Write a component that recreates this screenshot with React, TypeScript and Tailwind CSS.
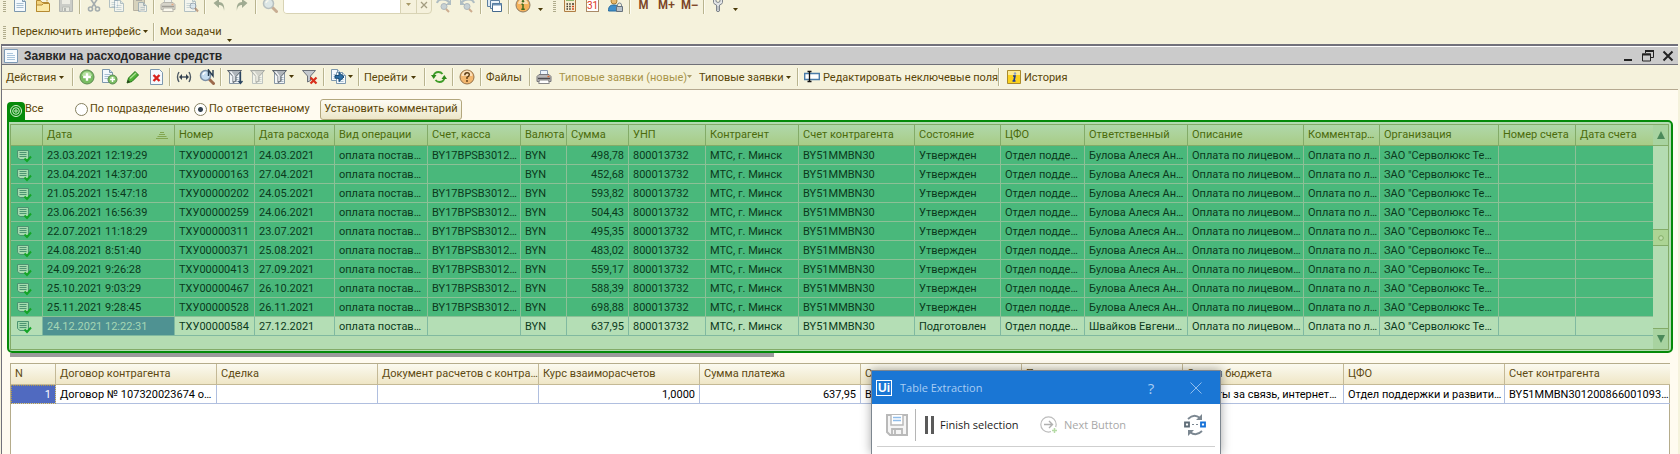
import React from "react";

type Kids = { children?: React.ReactNode };

const Svg = ({ children, w = 16, h = 16 }: Kids & { w?: number; h?: number }) => (
  <svg width={w} height={h} viewBox={`0 0 ${w} ${h}`} className="shrink-0" aria-hidden="true">
    {children}
  </svg>
);

const Page = ({ x = 2, y = 1, w = 12, h = 14, faded = false }) => (
  <g opacity={faded ? 0.55 : 1}>
    <path d={`M${x + 0.5} ${y + 0.5}h${w - 4}l3 3v${h - 4}h-${w - 1}z`} fill="#f4f9fd" stroke="#7d98ae" />
    <path d={`M${x + w - 3.5} ${y + 0.5}v3h3`} fill="#cfdfec" stroke="#7d98ae" />
    <path d={`M${x + 2.5} ${y + 5.5}h${w - 5}M${x + 2.5} ${y + 7.5}h${w - 5}M${x + 2.5} ${y + 9.5}h${w - 5}`} stroke="#a9c0d2" />
  </g>
);

const Lens = ({ faded = false }) => (
  <g opacity={faded ? 0.5 : 1}>
    <path d="M10.500 10.500l4 4" stroke="#9c6a4c" strokeWidth="3" strokeLinecap="round" />
    <circle cx="6.500" cy="6.500" r="5" fill="#c5dcf0" stroke="#7b8fa5" strokeWidth="1.500" />
    <path d="M4 6a3 3 0 0 1 2.500-2.500" stroke="#fff" strokeWidth="1.300" fill="none" />
  </g>
);

const Funnel = ({ faded = false }) => (
  <g opacity={faded ? 0.5 : 1}>
    <path d="M2.500 3.500v11h10v-11z" fill="#f3f6f8" stroke="#8796a4" />
    <path d="M9 8.500h2.500M9 10.500h2.500M9 12.500h2.500" stroke="#a9b8c5" />
    <path d="M.5 1.500h14L9 7.500v4.500l-3 1.500v-6z" fill="#aeb4ba" stroke="#5c646c" />
    <path d="M3.500 2.500L7 7v5" stroke="#f2f4f6" strokeWidth="1.300" fill="none" />
  </g>
);

const Printer = ({ faded = false }) => (
  <g opacity={faded ? 0.5 : 1}>
    <path d="M4.500 6V1.500h7V6" fill="#eef5fc" stroke="#8a9ab0" />
    <path d="M1 7.500L3 5.500h10l2 2V12.500H1z" fill="#b9b7b7" stroke="#77777b" />
    <path d="M2 9.500h12" stroke="#4b4b50" strokeWidth="1.500" />
    <path d="M3.500 11h9l.8 3.500H2.700z" fill="#fff" stroke="#888" />
    <path d="M11.500 7.500h2" stroke="#d9652c" strokeWidth="1.500" />
  </g>
);

const Floppy = () => (
  <g opacity=".55">
    <path d="M1.500 1.500h12l1 1v12h-13z" fill="#aab0b8" stroke="#7e868f" />
    <path d="M4 2h8v5H4z" fill="#e6e8ea" />
    <path d="M4.500 10h7v4.500h-7z" fill="#dfe2e4" stroke="#8b929a" />
    <path d="M6 11h2v3H6z" fill="#7e868f" />
  </g>
);

const PlusBall = ({ x = 8, y = 8, r = 7 }) => (
  <g>
    <circle cx={x} cy={y} r={r} fill="#79bd62" stroke="#5c8a50" />
    <path d={`M${x - r + 2} ${y - 1}a${r - 2} ${r - 2.5} 0 0 1 ${2 * (r - 2)} 0z`} fill="#b4dfa0" />
    <path d={`M${x} ${y - r * 0.55}v${r * 1.1}M${x - r * 0.55} ${y}h${r * 1.1}`} stroke="#fff" strokeWidth={r > 5 ? 2.4 : 1.5} />
  </g>
);

const Arrow = ({ dim = false }) => (
  <svg width="5" height="3" viewBox="0 0 5 3" className="mb-[2px] shrink-0" aria-hidden="true">
    <path d="M0 0h5L2.500 3z" fill={dim ? "#a89a68" : "#4a3a08"} />
  </svg>
);

const Sep = () => (
  <span className="flex h-[18px] w-[5px] shrink-0 justify-center">
    <span className="h-full w-px bg-[#b9b48f]" />
    <span className="h-full w-px bg-[#fdfcf0]" />
  </span>
);

const Grip = () => (
  <span className="h-[13px] w-[3px] shrink-0 bg-[repeating-linear-gradient(#b0ac8c_0_1px,transparent_1px_2px)]" />
);

const IconButton = ({ label, children }: Kids & { label: string }) => (
  <button type="button" aria-label={label} className="flex h-[22px] w-[23px] shrink-0 items-center justify-center">
    {children}
  </button>
);

const More = () => (
  <button type="button" aria-label="Ещё" className="flex h-4 w-3 shrink-0 items-end justify-center">
    <Arrow />
  </button>
);

function MainToolbar() {
  return (
    <div className="-mt-[6px] flex h-[22px] items-center">
      <span className="ml-[3px] mr-[2px] flex"><Grip /></span>
      <IconButton label="Новый"><Svg><Page /></Svg></IconButton>
      <IconButton label="Открыть">
        <Svg>
          <path d="M1.500 14.500v-11h4l1.500 2h6.500v9z" fill="#f2d27c" stroke="#b58a32" />
          <path d="M8 1.500h4v3" fill="none" stroke="#c89a3c" />
          <path d="M1.500 14.500V8H7l1.500-1.500h6v8z" fill="#fbe9a6" stroke="#b58a32" />
        </Svg>
      </IconButton>
      <IconButton label="Сохранить"><Svg><Floppy /></Svg></IconButton>
      <Sep />
      <IconButton label="Вырезать">
        <Svg>
          <g opacity=".6" fill="none" stroke="#6f7f90" strokeWidth="1.600">
            <path d="M4 1l6 9M12 1L6 10" />
            <circle cx="4.500" cy="12" r="2" />
            <circle cx="11.500" cy="12" r="2" />
          </g>
        </Svg>
      </IconButton>
      <IconButton label="Копировать"><Svg><Page x={0} y={0} w={9} h={11} faded /><Page x={5} y={3} w={10} h={12} faded /></Svg></IconButton>
      <IconButton label="Вставить">
        <Svg>
          <path d="M1.500 2.500h11v11h-11z" fill="#c3bda8" stroke="#8e897a" opacity=".6" />
          <path d="M4 1h6v3H4z" fill="#9a9a98" opacity=".7" />
          <Page x={6} y={5} w={9} h={10} faded />
        </Svg>
      </IconButton>
      <Sep />
      <IconButton label="Печать"><Svg><Printer faded /></Svg></IconButton>
      <IconButton label="Предварительный просмотр">
        <Svg><Page x={1} faded /><g opacity=".6"><circle cx="10" cy="9" r="3" fill="#cfe0ee" stroke="#77879a" /><path d="M12 11l3 3.500" stroke="#9c6a4c" strokeWidth="2" /></g></Svg>
      </IconButton>
      <Sep />
      <IconButton label="Отменить"><Svg><path d="M13 14c0-4-2-6-5-6v3L2.500 6 8 2v3c4 0 6 4 5 9z" fill="#a0ab92" /></Svg></IconButton>
      <IconButton label="Повторить"><Svg><path d="M3 14c0-4 2-6 5-6v3l5.500-5L8 2v3c-4 0-6 4-5 9z" fill="#a0ab92" /></Svg></IconButton>
      <Sep />
      <IconButton label="Найти"><Svg><Lens faded /></Svg></IconButton>
      <div className="ml-[2px] flex h-[18px] w-[149px] overflow-hidden rounded-b border border-[#d8d3b4] bg-[#f5f1dc]">
        <input aria-label="Строка поиска" className="min-w-0 flex-1 bg-white outline-none" />
        <button type="button" aria-label="Список" className="flex w-[16px] items-center justify-center border-l border-[#d8d3b4]"><Arrow dim /></button>
        <button type="button" aria-label="Очистить" className="flex w-[15px] items-center justify-center border-l border-[#d8d3b4]">
          <Svg w={8} h={8}><path d="M1 1l6 6M7 1L1 7" stroke="#a39c80" strokeWidth="1.300" /></Svg>
        </button>
      </div>
      {["Найти следующий", "Найти предыдущий"].map((label, i) => (
        <IconButton key={label} label={label}>
          <Svg>
            <g opacity=".55" transform={i ? "translate(16 0) scale(-1 1)" : undefined}>
              <path d="M1 6c1-4 8-5 12-1" stroke="#7792ad" strokeWidth="2" fill="none" />
              <path d="M15 2v6h-5z" fill="#7792ad" />
            </g>
            <g opacity=".6"><circle cx="8" cy="9.500" r="3" fill="#a9bcd0" stroke="#8193a8" /><path d="M10 12l3 3" stroke="#b4805e" strokeWidth="2" /></g>
          </Svg>
        </IconButton>
      ))}
      <Sep />
      <IconButton label="Окна">
        <Svg>
          <path d="M.5 1.500h9v8h-9z" fill="#dce9f3" stroke="#5d7f9f" />
          <path d="M3.500 3.500h9v8h-9z" fill="#eaf2f8" stroke="#5d7f9f" />
          <path d="M5.500 6.500h9v8h-9z" fill="#fff" stroke="#44698d" />
          <path d="M5.500 7.500h9" stroke="#6d92b5" strokeWidth="2" />
        </Svg>
      </IconButton>
      <Sep />
      <IconButton label="Справка">
        <Svg>
          <circle cx="8" cy="8" r="7" fill="#f5b25a" stroke="#8e7b62" />
          <path d="M3 7a5 5 0 0 1 10 0z" fill="#fbdcae" />
          <path d="M8 7v5.500M6.500 7.200H8M6.300 12.300h3.500" stroke="#3f6b1e" strokeWidth="1.500" />
          <circle cx="8" cy="4.300" r="1.200" fill="#3f6b1e" />
        </Svg>
      </IconButton>
      <More />
      <span className="ml-[7px] mr-[2px] flex"><Grip /></span>
      <IconButton label="Калькулятор">
        <Svg>
          <path d="M2.500.5h11v14h-11z" fill="#f6ecd0" stroke="#b07e44" />
          <path d="M4 2h8v2H4z" fill="#8fb56d" />
          <path d="M4.500 7h1.500M7.200 7h1.500M10 7h2M4.500 9.500h1.500M7.200 9.500h1.500M4.500 12h1.500M7.200 12h1.500" stroke="#3c3428" strokeWidth="1.500" />
          <path d="M10 9.500h2M10 12h2" stroke="#d2491e" strokeWidth="1.500" />
        </Svg>
      </IconButton>
      <IconButton label="Календарь">
        <span className="flex h-[14px] w-[13px] items-center justify-center border border-t-2 border-[#a98a68] border-t-[#8899aa] bg-white text-[10px] leading-[10px] text-[#e0331c]">31</span>
      </IconButton>
      <IconButton label="Пользователи">
        <Svg>
          <circle cx="6" cy="4" r="3" fill="#e8b96e" stroke="#a67d34" />
          <path d="M.5 14c0-5 2-6 5.500-6s4 1 4.500 3v3z" fill="#3f8fcb" stroke="#2a6c9e" />
          <path d="M9.500 9.500V8a2 2 0 0 1 4 0v1.500" fill="none" stroke="#7a8691" />
          <path d="M8.500 9.500h6v5h-6z" fill="#b8c2ca" stroke="#66727d" />
        </Svg>
      </IconButton>
      <Sep />
      {["M", "M+", "M−"].map((m) => (
        <button key={m} type="button" className="flex h-[22px] w-[23px] shrink-0 items-center justify-center font-['Liberation_Sans',sans-serif] text-[12px] font-bold leading-[10px] text-[#7b4426]">
          {m}
        </button>
      ))}
      <Sep />
      <IconButton label="Настройки">
        <Svg>
          <path d="M3.500 1.500v4Q4 7.500 6.500 8v6q1.500 1.500 3 0V8q2.500-.5 3-2.500v-4L10 .5v4l-2 1-2-1v-4z" fill="#e2e4e6" stroke="#7f858b" />
          <path d="M8 9v4.500" stroke="#9aa0a6" />
        </Svg>
      </IconButton>
      <More />
    </div>
  );
}

function InterfaceBar() {
  return (
    <div className="flex h-7 items-center pt-1">
      <span className="ml-[3px] flex"><Grip /></span>
      <button type="button" className="ml-[6px] flex w-[139px] shrink-0 items-center justify-between whitespace-nowrap pr-[3px]">
        Переключить интерфейс <Arrow />
      </button>
      <Sep />
      <button type="button" className="ml-[4px] whitespace-nowrap">Мои задачи</button>
      <span className="ml-[2px] flex pt-2"><More /></span>
    </div>
  );
}

function TitleBar() {
  return (
    <div className="flex h-[18px] items-center border-b border-[#707078] bg-[#cbcbcb]">
      <span className="ml-[2px] flex w-[14px]">
        <Svg w={14} h={14}>
          <path d="M.5.5h13v13H.5z" fill="#f7fbfe" stroke="#7d9ab5" />
          <path d="M3 4.500h6M3 6.500h8M3 8.500h8M3 10.500h8" stroke="#a9c5dc" />
        </Svg>
      </span>
      <h1 className="ml-[6px] flex-1 whitespace-nowrap font-['Liberation_Sans',sans-serif] text-[12px] font-bold text-[#262626]">
        Заявки на расходование средств
      </h1>
      <button type="button" aria-label="Свернуть" className="flex w-[20px] justify-center"><Svg w={12} h={12}><path d="M2 10h8" stroke="#222" strokeWidth="2" /></Svg></button>
      <button type="button" aria-label="Восстановить" className="flex w-[20px] justify-center">
        <Svg w={12} h={12}><path d="M3.500 3V1h8v6.500H9M.5 4h8v7h-8z" fill="none" stroke="#222" /><path d="M3 1h9M0 4.500h9" stroke="#222" strokeWidth="2" /></Svg>
      </button>
      <button type="button" aria-label="Закрыть" className="flex w-[20px] justify-center"><Svg w={12} h={12}><path d="M1.500 1.500l9 9M10.500 1.500l-9 9" stroke="#222" strokeWidth="2" /></Svg></button>
    </div>
  );
}

function ActionBar() {
  return (
    <div className="flex h-[25px] items-center border-b border-[#b5a990] bg-[#f5f2dc]">
      <button type="button" className="ml-1 flex w-[64px] shrink-0 items-center justify-between pr-[6px] pt-[2px]">Действия <Arrow /></button>
      <Sep />
      <IconButton label="Добавить"><Svg><PlusBall /></Svg></IconButton>
      <IconButton label="Добавить копированием"><Svg><Page x={0} y={0} w={11} h={14} /><PlusBall x={10.5} y={10.5} r={4.5} /></Svg></IconButton>
      <IconButton label="Изменить">
        <Svg><path d="M2 14l1.500-5L10 2.500 13.500 6 7 12.500z" fill="#4fb236" stroke="#25751a" /><path d="M5 9.500L11 4" stroke="#a9e08f" strokeWidth="1.500" /><path d="M2 14l1-3 2 2z" fill="#2d3a22" /></Svg>
      </IconButton>
      <IconButton label="Пометить на удаление">
        <Svg><path d="M2.500.5h9l3 3v12h-12z" fill="#f4f9fd" stroke="#7d98ae" /><path d="M5.500 6l6 6M11.500 6l-6 6" stroke="#d8221c" strokeWidth="2.400" /></Svg>
      </IconButton>
      <Sep />
      <IconButton label="Интервал дат">
        <Svg><path d="M3 3q-3 5 0 10M13 3q3 5 0 10M4 8h8" fill="none" stroke="#4d5964" strokeWidth="1.400" /><path d="M3 8l3-3v6zM13 8l-3-3v6z" fill="#33404c" /></Svg>
      </IconButton>
      <IconButton label="Найти по номеру">
        <Svg><Lens /><path d="M9.500 7V1l4.500 6V1" fill="none" stroke="#263b50" strokeWidth="1.400" /></Svg>
      </IconButton>
      <Sep />
      <IconButton label="Отбор"><Svg><Funnel /><path d="M13.500 3v11M11.500 12l2 2.500 2-2.500" stroke="#2b4560" strokeWidth="1.300" fill="none" /></Svg></IconButton>
      <IconButton label="Отбор по значению"><Svg><Funnel faded /></Svg></IconButton>
      <button type="button" aria-label="История отборов" className="flex w-[29px] shrink-0 items-center gap-px pl-[3px]"><Svg><Funnel /></Svg><Arrow /></button>
      <IconButton label="Отключить отбор">
        <Svg><path d="M.5 1.500h13L8.500 7v4.500l-3 1.500V7z" fill="#c4c9ce" stroke="#6b7178" /><path d="M8.500 8.500l6 6M14.500 8.500l-6 6" stroke="#d8301c" strokeWidth="2.200" /></Svg>
      </IconButton>
      <Sep />
      <button type="button" aria-label="Ввести на основании" className="flex w-[30px] shrink-0 items-center gap-px pl-[5px]">
        <Svg><Page x={0} y={0} w={10} h={12} /><Page x={5} y={3} w={10} h={12} /><path d="M4 9V6.500h4v-3l5 4.500-5 4.500V9.500z" fill="#2c6ea5" stroke="#174a75" /></Svg><Arrow />
      </button>
      <Sep />
      <button type="button" className="ml-[3px] flex w-[58px] shrink-0 items-center justify-between pr-[6px] pt-[2px]">Перейти <Arrow /></button>
      <Sep />
      <IconButton label="Обновить">
        <Svg><path d="M2.500 7q1-4 5-4 2.500 0 4 2M13.500 9q-1 4-5 4-2.500 0-4-2" fill="none" stroke="#3e9c28" strokeWidth="1.800" /><path d="M0 6h5.500L2.700 10zM16 10h-5.500L13.300 6z" fill="#2e8a1b" /></Svg>
      </IconButton>
      <Sep />
      <IconButton label="Помощь">
        <Svg><circle cx="8" cy="8" r="7" fill="#f3b76f" stroke="#94724a" /><path d="M2.500 7a5.500 5.500 0 0 1 11 0z" fill="#fbdfb8" /><path d="M5.800 6.200q0-2.500 2.300-2.500t2.200 2.100Q10.300 7.200 8 8.300V10" fill="none" stroke="#5b3a12" strokeWidth="1.400" /><circle cx="8" cy="12" r=".9" fill="#5b3a12" /></Svg>
      </IconButton>
      <Sep />
      <button type="button" className="ml-[3px] w-[41px] shrink-0 pt-[2px] text-left">Файлы</button>
      <Sep />
      <button type="button" disabled className="ml-[4px] flex w-[156px] shrink-0 items-center whitespace-nowrap text-[#a89448]">
        <Svg><Printer /></Svg>
        <span className="ml-[7px] flex-1 pt-[2px] text-left">Типовые заявки (новые)</span>
        <Arrow dim />
      </button>
      <button type="button" className="ml-[7px] flex w-[96px] shrink-0 items-center justify-between whitespace-nowrap pr-[4px] pt-[2px]">Типовые заявки <Arrow /></button>
      <Sep />
      <button type="button" className="ml-[4px] flex w-[192px] shrink-0 items-center gap-[3px] whitespace-nowrap">
        <Svg><path d="M.7 4.500h14.600v6H.7z" fill="#fff" stroke="#4a7ba8" strokeWidth="1.400" /><path d="M3.500 2.500h4M3.500 12.500h4M5.500 2.500v10" stroke="#111" strokeWidth="1.300" /></Svg>
        <span className="pt-[2px]">Редактировать неключевые поля</span>
      </button>
      <Sep />
      <button type="button" className="ml-[6px] flex items-center gap-[3px]">
        <Svg w={14} h={14}><path d="M.5.5h13v13H.5z" fill="#fbd21e" stroke="#a98a2c" /><path d="M1 1h12v4H1z" fill="#fdeb94" /><path d="M6 6h2L7 10.500M5.500 11h3" stroke="#1b3a9c" strokeWidth="1.600" fill="none" /><circle cx="8" cy="3.500" r="1.200" fill="#8ea4c8" /></Svg>
        <span className="pt-[2px]">История</span>
      </button>
    </div>
  );
}

function Radio({ label, checked }: { label: string; checked?: boolean }) {
  return (
    <label className="flex items-center whitespace-nowrap">
      <input
        type="radio"
        name="filter"
        defaultChecked={checked}
        className="mr-[2px] size-[13px] shrink-0 appearance-none rounded-full border border-[#85805f] bg-white checked:bg-[radial-gradient(#33414d_0_2px,#fff_3px)]"
      />
      {label}
    </label>
  );
}

function FilterRow() {
  return (
    <div className="flex h-[30px] items-center">
      <span className="ml-[5px] flex size-[18px] shrink-0 items-center justify-center self-end rounded-t bg-[#068a0a]">
        <Svg w={14} h={14}>
          <g fill="none" stroke="#d5f0d0"><circle cx="7" cy="7" r="5.500" /><circle cx="7" cy="7" r="3.300" /><circle cx="7" cy="7" r="1.200" /></g>
        </Svg>
      </span>
      <div className="flex items-center pt-2">
        <span className="w-[50px]">Все</span>
        <span className="w-[119px]"><Radio label="По подразделению" /></span>
        <span className="w-[126px]"><Radio label="По ответственному" checked /></span>
        <button type="button" className="h-[21px] w-[142px] whitespace-nowrap rounded-[3px] border border-[#b3a77e] bg-linear-to-b from-[#fdfcf4] to-[#ece6c8]">
          Установить комментарий
        </button>
      </div>
    </div>
  );
}

const columns = ["", "Дата", "Номер", "Дата расхода", "Вид операции", "Счет, касса", "Валюта", "Сумма", "УНП", "Контрагент", "Счет контрагента", "Состояние", "ЦФО", "Ответственный", "Описание", "Комментар…", "Организация", "Номер счета", "Дата счета"];
const widths = [32, 132, 80, 80, 93, 93, 46, 62, 77, 93, 116, 86, 84, 103, 116, 76, 119, 77, 78];

const payments: [string, string, string, boolean, string][] = [
  ["23.03.2021 12:19:29", "ТХУ00000121", "24.03.2021", true, "498,78"],
  ["23.04.2021 14:37:00", "ТХУ00000163", "27.04.2021", false, "452,68"],
  ["21.05.2021 15:47:18", "ТХУ00000202", "24.05.2021", true, "593,82"],
  ["23.06.2021 16:56:39", "ТХУ00000259", "24.06.2021", true, "504,43"],
  ["22.07.2021 11:18:29", "ТХУ00000311", "23.07.2021", true, "495,35"],
  ["24.08.2021 8:51:40", "ТХУ00000371", "25.08.2021", true, "483,02"],
  ["24.09.2021 9:26:28", "ТХУ00000413", "27.09.2021", true, "559,17"],
  ["25.10.2021 9:03:29", "ТХУ00000467", "26.10.2021", true, "588,39"],
  ["25.11.2021 9:28:45", "ТХУ00000528", "26.11.2021", true, "698,88"],
  ["24.12.2021 12:22:31", "ТХУ00000584", "27.12.2021", false, "637,95"],
];

const DocIcon = () => (
  <Svg w={18} h={14}>
    <path d="M2.500 1.500h11v9H5l-2.500-2z" fill="#a5dcae" stroke="#4d9472" />
    <path d="M4.500 3.500h7M4.500 5.500h7M4.500 7.500h7" stroke="#4d9472" />
    <path d="M9.500 9.500l2.500 2.500 4-4.500" fill="none" stroke="#13a526" strokeWidth="2" />
  </Svg>
);

function PaymentsTable() {
  return (
    <div className="ml-[5px] mr-[5px] flex rounded-[5px] rounded-tl-none border-2 border-[#068a0a] bg-[#b4dcb2] pb-px pl-px pr-[2px] pt-[2px]">
      <div className="min-w-0 flex-1 border border-r-0 border-[#83ab68] pb-[13px]">
        <table className="w-full table-fixed border-separate border-spacing-0 whitespace-nowrap text-left text-[#0b3a1c]">
          <colgroup>{widths.map((w, i) => <col key={i} style={{ width: w }} />)}</colgroup>
          <thead>
            <tr>
              {columns.map((c, i) => (
                <th key={i} className="h-[21px] overflow-hidden border-b border-r border-[#83ab68] bg-linear-to-b from-[#b0d8aa] to-[#a8cc86] p-0 pl-1 font-normal text-[#4b6b0c]">
                  {i === 1 ? (
                    <span className="flex items-center justify-between pr-[6px]">
                      {c}
                      <Svg w={12} h={8}><path d="M4 1.500h4M3 3.500h6M1.500 5.500h9M0 7.500h12" stroke="#83a650" strokeWidth="1.200" /></Svg>
                    </span>
                  ) : c}
                </th>
              ))}
            </tr>
          </thead>
          <tbody>
            {payments.map(([date, num, spend, acc, sum], r) => {
              const last = r === payments.length - 1;
              const cells = [null, date, num, spend, "оплата постав…", acc ? "BY17BPSB3012…" : "", "BYN", sum, "800013732", "МТС, г. Минск", "BY51MMBN30", last ? "Подготовлен" : "Утвержден", "Отдел подде…", last ? "Швайков Евгени…" : "Булова Алеся Ан…", "Оплата по лицевом…", "Оплата по л…", "ЗАО \"Серволюкс Те…", "", ""];
              return (
                <tr key={num} className={last ? "bg-[#b4deb5]" : "bg-[#49b87b]"}>
                  {cells.map((v, i) => (
                    <td
                      key={i}
                      className={`h-[19px] overflow-hidden border-b border-r p-0 pt-[2px] ${last ? "border-[#80b9a0]" : "border-[#8cc096]"} ${i === 7 ? "pr-1 text-right" : "pl-1"} ${last && i === 1 ? "bg-[#4f9292] text-[#a5d6b4]" : ""}`}
                    >
                      {i === 0 ? <DocIcon /> : v}
                    </td>
                  ))}
                </tr>
              );
            })}
          </tbody>
        </table>
      </div>
      <div className="flex w-[16px] flex-col border border-l-0 border-[#83ab68] bg-[#b4dcb2]">
        <button type="button" aria-label="Вверх" className="flex h-[21px] items-center justify-center border-b border-[#83ab68] bg-[#a8d3a0]">
          <Svg w={8} h={8}><path d="M4 0l4 8H0z" fill="#4b8a5a" /></Svg>
        </button>
        <span className="h-[83px]" />
        <span className="flex h-[17px] items-center justify-center border-y border-[#83ab68] bg-[#acd494]">
          <Svg w={6} h={6}><circle cx="3" cy="3" r="2.300" fill="#c0e0ac" stroke="#83ab68" /></Svg>
        </span>
        <span className="flex-1" />
        <button type="button" aria-label="Вниз" className="flex h-[21px] items-center justify-center border-t border-[#83ab68] bg-[#a8d3a0]">
          <Svg w={8} h={8}><path d="M4 8l4-8H0z" fill="#4b8a5a" /></Svg>
        </button>
      </div>
    </div>
  );
}

const detailCols = ["N", "Договор контрагента", "Сделка", "Документ расчетов с контра…", "Курс взаиморасчетов", "Сумма платежа", "С", "П", "Статья бюджета", "ЦФО", "Счет контрагента"];
const detailWidths = [45, 161, 161, 161, 161, 161, 161, 161, 161, 161, 165];
const detailRow = ["1", "Договор № 107320023674 о…", "", "", "1,0000", "637,95", "B", "", "Затраты за связь, интернет…", "Отдел поддержки и развити…", "BY51MMBN301200866001093…"];

function DetailTable() {
  return (
    <div className="ml-2 mr-2 mt-[6px] flex-1 border border-b-0 border-[#b5ac8b] bg-white">
      <table className="w-full table-fixed border-separate border-spacing-0 whitespace-nowrap text-left">
        <colgroup>{detailWidths.map((w, i) => <col key={i} style={{ width: w }} />)}</colgroup>
        <thead>
          <tr>
            {detailCols.map((c) => (
              <th key={c} className="h-[21px] overflow-hidden border-b border-r border-[#c4b996] bg-linear-to-b from-[#fbfaf0] to-[#efe6c6] p-0 pl-1 font-normal text-[#5e4a12] last:border-r-0">{c}</th>
            ))}
          </tr>
        </thead>
        <tbody>
          <tr>
            {detailRow.map((v, i) => (
              <td key={i} className={`h-[19px] overflow-hidden border-b border-r border-[#b0bfdf] p-0 pt-[2px] last:border-r-0 ${i === 0 || i === 4 || i === 5 ? "pr-1 text-right" : "pl-1"} ${i === 0 ? "bg-[#506ac0] text-white outline-1 -outline-offset-1 outline-dotted outline-[#b39b4a]" : "text-black"}`}>{v}</td>
            ))}
          </tr>
        </tbody>
      </table>
    </div>
  );
}

function ExtractionDialog() {
  return (
    <section role="dialog" aria-label="Table Extraction" className="absolute left-[871px] top-[370px] h-[84px] w-[350px] border border-b-0 border-[#7d868f] bg-white font-['Open_Sans',sans-serif] text-[11px] text-[#1c1c1c] shadow-[0_0_10px_rgba(0,0,0,0.35)]">
      <header className="flex h-[33px] items-center bg-[#1a76d4] pl-1 pr-[14px] text-[#a9cdf3]">
        <span className="flex size-4 items-center justify-center border border-white font-['Liberation_Sans',sans-serif] text-[12px] font-bold leading-none text-white">Ui</span>
        <span className="ml-2 flex-1">Table Extraction</span>
        <button type="button" aria-label="Help" className="w-6 text-[15px]">?</button>
        <button type="button" aria-label="Close" className="ml-[23px] flex w-[20px] justify-center"><Svg w={12} h={12}><path d="M.5.5l11 11M11.500.5l-11 11" stroke="#8fbdee" /></Svg></button>
      </header>
      <div className="mx-[5px] flex h-[43px] items-center border-b border-[#cfcfcf]">
        <button type="button" aria-label="Save" className="ml-[9px]">
          <Svg w={22} h={22}>
            <path d="M1 1h20v20H4l-3-3z" fill="#f5f5f5" stroke="#b9b9b9" strokeWidth="2" />
            <path d="M5 1v10h12V1" fill="#fff" stroke="#b9b9b9" strokeWidth="1.500" />
            <path d="M7 3.500h8M7 6.500h8" stroke="#8fbdea" strokeWidth="1.500" />
            <path d="M6 21v-6h10v6M9 16v4" fill="none" stroke="#b9b9b9" strokeWidth="1.800" />
          </Svg>
        </button>
        <span className="ml-[7px] h-8 w-px bg-[#b5b5b5]" />
        <button type="button" className="ml-[9px] flex w-[97px] items-center gap-[6px] whitespace-nowrap">
          <Svg w={9} h={18}><path d="M1.500 0v18M7.500 0v18" stroke="#5a5a5a" strokeWidth="3" /></Svg>
          Finish selection
        </button>
        <button type="button" disabled className="ml-[18px] flex items-center gap-[6px] whitespace-nowrap text-[#a8a8a8]">
          <Svg w={18} h={18}>
            <circle cx="8.500" cy="8.500" r="7.700" fill="#fff" stroke="#bdbdbd" strokeWidth="1.200" />
            <path d="M4 8.500h8.500M9 5l3.500 3.500L9 12" fill="none" stroke="#b0b0b0" strokeWidth="1.400" />
            <path d="M14.500 11v7M11 14.500h7" stroke="#fff" strokeWidth="4" />
            <path d="M14.500 12v5M12 14.500h5" stroke="#b5dba5" strokeWidth="1.500" />
          </Svg>
          Next Button
        </button>
        <button type="button" aria-label="Switch" className="ml-auto mr-[9px]">
          <Svg w={22} h={22}>
            <path d="M4 5q6-6 12-1M18 17q-6 6-12 1" fill="none" stroke="#7b8791" strokeWidth="1.800" />
            <path d="M18 0v6h-6zM4 22v-6h6z" fill="#7b8791" />
            <path d="M1 8.500h4v4H1z" fill="#fff" stroke="#5d6b76" strokeWidth="1.800" />
            <path d="M17 8.500h4v4h-4z" fill="#fff" stroke="#1471d8" strokeWidth="1.800" />
            <path d="M8 10.500h2M12 10.500h2" stroke="#7b8791" />
          </Svg>
        </button>
      </div>
    </section>
  );
}

export default function App() {
  return (
    <div className="relative flex min-h-screen flex-col overflow-hidden bg-[#f5f2dc] font-[Roboto,sans-serif] text-[11px] leading-[16px] text-[#5a4608]">
      <MainToolbar />
      <InterfaceBar />
      <main className="ml-px mr-[2px] flex flex-1 flex-col border-l border-t-2 border-[#71717b] bg-[#fffbf0]">
        <div className="h-px bg-white" />
        <TitleBar />
        <ActionBar />
        <FilterRow />
        <PaymentsTable />
        <div className="ml-2 h-1 w-[764px] bg-[#9c9a9b]" />
        <DetailTable />
      </main>
      <ExtractionDialog />
    </div>
  );
}
